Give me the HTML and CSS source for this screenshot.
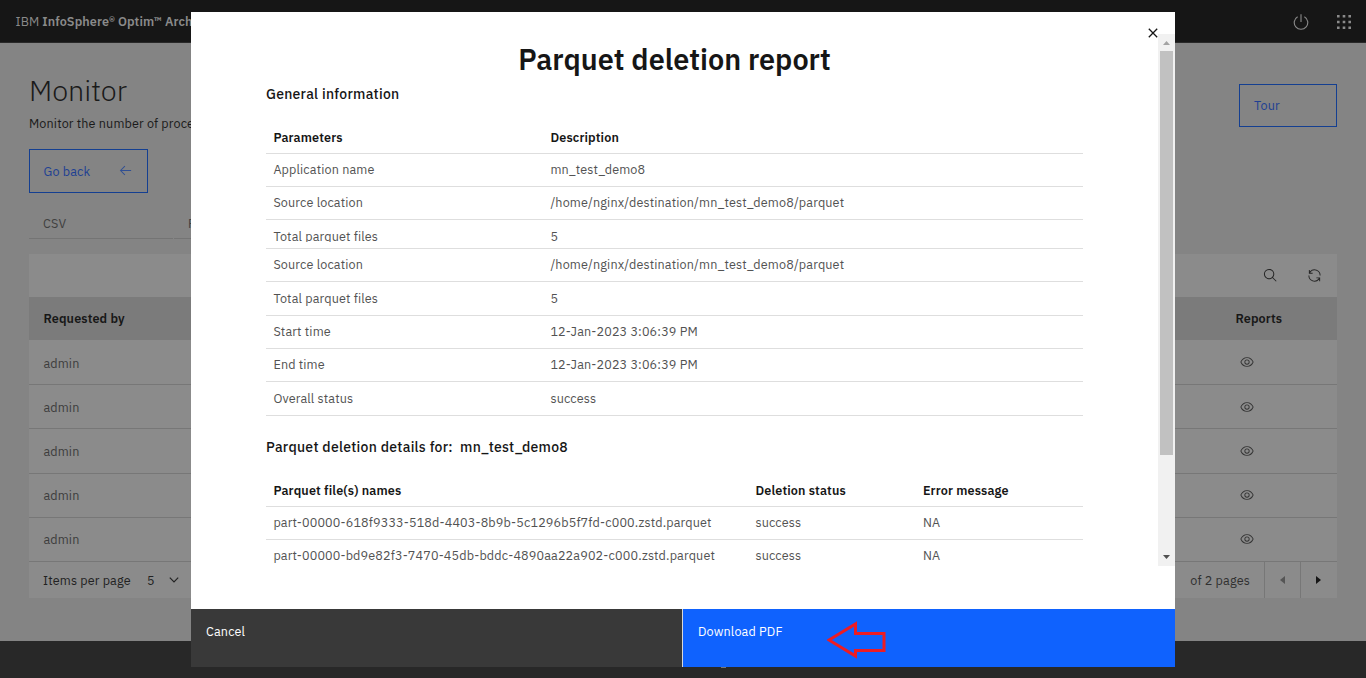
FILE: index.html
```html
<!DOCTYPE html>
<html lang="en">
<head>
<meta charset="utf-8">
<title>Monitor</title>
<link rel="stylesheet" href="styles.css">
</head>
<body>
<svg class="defs" width="0" height="0">
  <symbol id="eye" viewBox="0 0 32 32"><path d="M30.94 15.66A16.69 16.69 0 0 0 16 5 16.69 16.69 0 0 0 1.06 15.66a1 1 0 0 0 0 .68A16.69 16.69 0 0 0 16 27a16.69 16.69 0 0 0 14.94-10.66 1 1 0 0 0 0-.68ZM16 25c-5.3 0-10.9-3.93-12.93-9C5.1 10.93 10.7 7 16 7s10.9 3.93 12.93 9C26.9 21.07 21.3 25 16 25Z"/><path d="M16 10a6 6 0 1 0 6 6 6 6 0 0 0-6-6Zm0 10a4 4 0 1 1 4-4 4 4 0 0 1-4 4Z"/></symbol>
</svg>
<div class="page">
  <header class="topbar">
    <div class="brand">IBM <b>InfoSphere® Optim™ Archive</b></div>
    <div class="top-icons">
      <svg class="power" width="18" height="18" viewBox="0 0 32 32"><path d="M22.5 5.74l-1 1.73a11 11 0 1 1-11 0l-1-1.73a13 13 0 1 0 13 0Z"/><path d="M15 2h2v14h-2z"/></svg>
      <svg class="apps" width="14" height="14" viewBox="0 0 14 14"><path d="M0 0h2.6v2.6H0zM5.7 0h2.6v2.6H5.7zM11.4 0H14v2.6h-2.6zM0 5.7h2.6v2.6H0zM5.7 5.7h2.6v2.6H5.7zM11.4 5.7H14v2.6h-2.6zM0 11.4h2.6V14H0zM5.7 11.4h2.6V14H5.7zM11.4 11.4H14V14h-2.6z"/></svg>
    </div>
  </header>
  <main class="main">
    <div class="intro">
      <div>
        <h1>Monitor</h1>
        <p class="lead">Monitor the number of processes</p>
      </div>
      <div class="btn tour">Tour</div>
    </div>
    <div class="btn back">Go back
      <svg width="15" height="15" viewBox="0 0 32 32"><path d="M14 26l1.41-1.41L7.83 17H28v-2H7.83l7.58-7.59L14 6 4 16l10 10z"/></svg>
    </div>
    <div class="tabs"><div class="tab">CSV</div><div class="tab">Parquet</div></div>
    <section class="card">
      <div class="toolbar">
        <svg width="15" height="15" viewBox="0 0 32 32"><path d="M29 27.59l-7.55-7.55a11 11 0 1 0-1.41 1.41L27.59 29ZM4 13a9 9 0 1 1 9 9 9 9 0 0 1-9-9Z"/></svg>
        <svg width="15" height="15" viewBox="0 0 32 32"><path d="M12 10H6.78A11 11 0 0 1 27 16h2A13 13 0 0 0 6 7.68V4H4v8h8ZM20 22h5.22A11 11 0 0 1 5 16H3a13 13 0 0 0 23 8.32V28h2v-8h-8Z"/></svg>
      </div>
      <div class="row head"><span>Requested by</span><span>Reports</span></div>
      <div class="row plus first"><span>admin</span><svg width="14" height="14"><use href="#eye"/></svg></div>
      <div class="row"><span>admin</span><svg width="14" height="14"><use href="#eye"/></svg></div>
      <div class="row plus"><span>admin</span><svg width="14" height="14"><use href="#eye"/></svg></div>
      <div class="row raised"><span>admin</span><svg width="14" height="14"><use href="#eye"/></svg></div>
      <div class="row raised"><span>admin</span><svg width="14" height="14"><use href="#eye"/></svg></div>
      <div class="pager">
        <span class="per-page">Items per page</span><span class="five">5</span>
        <svg class="chev" width="10" height="6" viewBox="0 0 10 6"><path d="M.8.7L5 4.9 9.2.7"/></svg>
        <span class="of">of 2 pages</span>
        <div class="nav off"><svg width="5" height="8" viewBox="0 0 5 8"><path d="M5 0v8L0 4z"/></svg></div>
        <div class="nav"><svg width="5" height="8" viewBox="0 0 5 8"><path d="M0 0v8l5-4z"/></svg></div>
      </div>
    </section>
  </main>
  <footer class="footer"><i></i></footer>
</div>

<div class="modal">
  <svg class="close" width="10" height="10" viewBox="0 0 10 10"><path d="M.8.8l8.4 8.4M9.2.8L.8 9.2"/></svg>
  <div class="body">
    <div class="content">
      <h2>Parquet deletion report</h2>
      <h3>General information</h3>
      <div class="table info">
        <div class="tr th"><span>Parameters</span><span>Description</span></div>
        <div class="tr"><span>Application name</span><span>mn_test_demo8</span></div>
        <div class="tr"><span>Source location</span><span>/home/nginx/destination/mn_test_demo8/parquet</span></div>
        <div class="tr cut"><span>Total parquet files</span><span>5</span></div>
        <div class="tr"><span>Source location</span><span>/home/nginx/destination/mn_test_demo8/parquet</span></div>
        <div class="tr tall"><span>Total parquet files</span><span>5</span></div>
        <div class="tr"><span>Start time</span><span>12-Jan-2023 3:06:39 PM</span></div>
        <div class="tr"><span>End time</span><span>12-Jan-2023 3:06:39 PM</span></div>
        <div class="tr tall"><span>Overall status</span><span>success</span></div>
      </div>
      <h3 class="second">Parquet deletion details for: &nbsp;mn_test_demo8</h3>
      <div class="table files">
        <div class="tr th"><span>Parquet file(s) names</span><span>Deletion status</span><span>Error message</span></div>
        <div class="tr"><span>part-00000-618f9333-518d-4403-8b9b-5c1296b5f7fd-c000.zstd.parquet</span><span>success</span><span>NA</span></div>
        <div class="tr last"><span>part-00000-bd9e82f3-7470-45db-bddc-4890aa22a902-c000.zstd.parquet</span><span>success</span><span>NA</span></div>
      </div>
    </div>
    <div class="scroll">
      <svg width="7" height="4" viewBox="0 0 7 4"><path fill="#a3a3a3" d="M0 4h7L3.5 0z"/></svg>
      <div class="thumb"></div>
      <svg width="7" height="4" viewBox="0 0 7 4"><path fill="#505050" d="M0 0h7L3.5 4z"/></svg>
    </div>
  </div>
  <div class="actions">
    <div class="cancel">Cancel</div>
    <div class="download">Download PDF
      <svg class="arrow" width="60" height="38" viewBox="0 0 60 38"><path d="M2 19L28.5 3v9.500H57v17H28.500V35z"/></svg>
    </div>
  </div>
</div>
</body>
</html>
```
FILE: styles.css
```css
* { box-sizing: border-box; }
body { margin: 0; width: 1366px; height: 678px; overflow: hidden; font: 12.6px/18px "IBM Plex Sans", Roboto, sans-serif; letter-spacing: .144px; color: #1a1a1a; }
.defs { position: absolute; }
h1, h2, h3, p { margin: 0; }
svg { display: block; flex: none; }
.page { height: 678px; display: flex; flex-direction: column; background: #848484; }
.topbar { height: 43px; background: #161616; border-bottom: 1px solid #292929; display: flex; justify-content: space-between; padding: 2px 15px 0; align-items: center; color: #8a8a8a; white-space: nowrap; }
.brand { letter-spacing: .09px; padding: 0 0 2px .5px; }
.brand b { font-weight: 600; }
.top-icons { display: flex; align-items: center; gap: 27px; fill: #8a8a8a; }
.main { flex: 1; padding: 31px 29px 0; }
.intro { display: flex; justify-content: space-between; height: 75px; }
h1 { font-size: 28.8px; line-height: 32px; font-weight: 300; letter-spacing: 0; }
.lead { margin-top: 8px; white-space: nowrap; }
.btn { border: 1px solid #143f91; color: #203f93; height: 44px; padding: 12px 14px; display: flex; justify-content: space-between; }
.tour { width: 98px; height: 43px; margin-top: 10px; padding-top: 11px; }
.back { width: 119px; padding-left: 13.500px; }
.back svg { fill: #304f93; margin: 1px 0; }
.tabs { display: flex; gap: 1px; margin-top: 16px; }
.tab { width: 144px; height: 30px; padding: 5px 14px; border-bottom: 1px solid #747474; color: #404040; }
.card { margin-top: 15px; background: #8b8b8b; }
.toolbar { height: 43px; display: flex; justify-content: flex-end; gap: 29px; padding: 14px 15px; fill: #252525; }
.row { height: 44px; display: grid; grid-template-columns: 1192px 1fr; padding: 0 14px 0 14.400px; align-items: center; border-bottom: 1px solid #777; color: #3d3d3d; }
.row svg { fill: #333; margin-left: 5px; }
.plus { height: 45px; }
.first span { padding-top: 2px; }
.raised { padding-bottom: 2px; }
.head { height: 43px; background: #7b7b7b; border: 0; color: #171717; font-weight: 600; }
.head span { padding-bottom: 2px; }
.pager { height: 36px; display: flex; align-items: center; padding: 0 1px 0 14px; color: #222; }
.per-page { width: 104px; }
.five { width: 22px; }
.chev { fill: none; stroke: #222; stroke-width: 1.2; }
.of { margin-left: auto; color: #303030; padding-right: 14px; }
.nav { width: 36px; height: 36px; border-left: 1px solid #777; display: flex; align-items: center; justify-content: center; fill: #161616; }
.off { fill: #555; }
.footer { height: 37px; background: #282828; padding: 26px 0 0 721px; }
.footer i { display: block; width: 5px; height: 1px; background: #777; }

.modal { position: absolute; left: 191px; top: 12px; width: 984px; height: 655px; background: #fff; display: flex; flex-direction: column; }
.close { position: absolute; left: 957px; top: 16px; fill: none; stroke: #161616; stroke-width: 1.3; }
.body { height: 597px; padding-top: 22px; display: flex; justify-content: space-between; }
.content { width: 892px; height: 532px; padding-left: 75px; overflow: hidden; }
h2 { font-size: 28.8px; line-height: 36px; margin-top: 7px; font-weight: 600; text-align: center; letter-spacing: 0; color: #161616; }
h3 { font-size: 14px; line-height: 18px; margin-top: 8px; font-weight: 500; letter-spacing: .27px; color: #161616; }
.table { margin-top: 19px; }
.tr { height: 33px; display: grid; grid-template-columns: 277px 1fr; padding: 0 0 2px 7.400px; align-items: center; border-bottom: 1px solid #dedede; color: #525252; white-space: nowrap; }
.files .tr { grid-template-columns: 482px 167.500px 1fr; }
.th { height: 32px; color: #161616; font-weight: 600; }
.cut { height: 29px; align-items: start; }
.cut span { height: 15px; margin-top: 7px; overflow: hidden; }
.tall { height: 34px; }
.files .last { border: 0; height: 31px; padding-bottom: 1px; }
.second { margin-top: 22px; }
.scroll { width: 17px; height: 532px; background: #f1f1f1; display: flex; flex-direction: column; align-items: center; padding: 7px 0; }
.thumb { width: 13px; height: 404px; background: #c1c1c1; margin: 6px 0 auto; }
.actions { height: 58px; display: flex; color: #fff; }
.cancel { width: 492px; padding: 13px 15px; background: #393939; border-right: 1px solid #d8d8d8; }
.download { flex: 1; padding: 13px 15px; background: #0f62fe; display: flex; }
.arrow { margin: -1px 0 0 44px; fill: none; stroke: #ed1c24; stroke-width: 3; }
```
